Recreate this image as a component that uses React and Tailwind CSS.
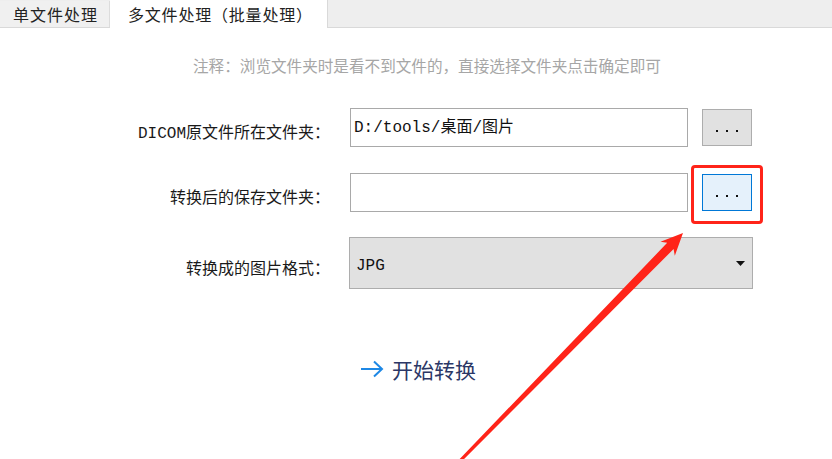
import React from "react";

const sans = { fontFamily: '"Noto Sans CJK SC", "Noto Sans", sans-serif' };
const mono = { fontFamily: '"Liberation Mono", "Noto Sans CJK SC", monospace' };

const FormRow = ({ label, children }) => (
  <div className="flex items-center">
    <div className="w-[332px] shrink-0 pt-[13px] text-right text-[16px] leading-[20px] text-[#1a1a1a] pr-[2px]" style={mono}>
      {label}
    </div>
    <div className="ml-[18px] flex items-center">{children}</div>
  </div>
);

const BrowseButton = ({ active }) => (
  <button
    className={`ml-[14px] flex h-[37px] w-[50px] items-center justify-center border ${
      active ? "border-[#0078d7] bg-[#e5f1fb]" : "border-[#adadad] bg-[#e1e1e1]"
    }`}
  >
    <span className="mt-[6px] flex gap-[8px]">
      <span className="h-[2px] w-[2px] bg-[#111]" />
      <span className="h-[2px] w-[2px] bg-[#111]" />
      <span className="h-[2px] w-[2px] bg-[#111]" />
    </span>
  </button>
);

const App = () => {
  return (
    <div className="relative h-[459px] w-[832px] overflow-hidden bg-white" style={sans}>
      {/* tab strip */}
      <div className="flex h-[28px] items-end border-b border-[#d9d9d9] bg-[#eeeeee]">
        <div className="flex h-[26px] w-[110px] items-center border-r border-[#dcdcdc] bg-[#f0f0f0] pl-[13px] text-[16px] tracking-[1px] text-[#222]">
          单文件处理
        </div>
        <div className="-mb-px flex h-[28px] w-[218px] items-center border-r border-[#d9d9d9] bg-white pl-[18px] text-[16px] tracking-[0.8px] text-[#222]">
          多文件处理（批量处理）
        </div>
      </div>

      {/* note */}
      <div className="mt-[26px] pl-[193px] text-[15.6px] leading-[22px] text-[#a6a6a6]">
        注释：浏览文件夹时是看不到文件的，直接选择文件夹点击确定即可
      </div>

      <div className="mt-[32px] flex flex-col gap-[26px]">
        <FormRow label="DICOM原文件所在文件夹：">
          <div className="flex h-[39px] w-[338px] items-center border border-[#a9a9a9] bg-white pl-[3px] text-[16px] text-[#111]" style={mono}>
            D:/tools/桌面/图片
          </div>
          <BrowseButton />
        </FormRow>

        <FormRow label="转换后的保存文件夹：">
          <div className="h-[39px] w-[338px] border border-[#a9a9a9] bg-white" />
          <BrowseButton active />
        </FormRow>
      </div>

      <div className="mt-[25px]">
        <FormRow label="转换成的图片格式：">
          <div className="-ml-px flex h-[52px] w-[404px] items-center justify-between border border-[#adadad] bg-[#e1e1e1] pl-[6px] pr-[7px] pt-[6px]">
            <span className="text-[16px] text-[#111]" style={mono}>JPG</span>
            <svg width="9" height="5" viewBox="0 0 9 5" className="-mt-[6px]">
              <polygon points="0,0 9,0 4.5,5" fill="#111" />
            </svg>
          </div>
        </FormRow>
      </div>

      {/* start */}
      <div className="mt-[66px] flex items-center pl-[360px]">
        <svg width="24" height="18" viewBox="0 0 24 18" fill="none" stroke="#1e88e5" strokeWidth="2">
          <line x1="1" y1="9" x2="22" y2="9" />
          <polyline points="14,1.5 22,9 14,16.5" />
        </svg>
        <span className="ml-[8px] text-[21px] leading-[28px] text-[#2b3766]">开始转换</span>
      </div>

      {/* annotation: highlight box */}
      <div className="pointer-events-none absolute left-[691px] top-[165px] h-[59px] w-[72px] rounded-[4px] border-[3px] border-[#ff2419]" />

      {/* annotation: arrow */}
      <svg className="pointer-events-none absolute left-0 top-0" width="832" height="459" viewBox="0 0 832 459">
        <polygon
          points="456.9,461.9 667.2,242.8 660.5,241.7 683,233 674.8,255.7 673.6,249.0 459.1,464.0"
          fill="#ff2419"
        />
      </svg>
    </div>
  );
};

export default App;
